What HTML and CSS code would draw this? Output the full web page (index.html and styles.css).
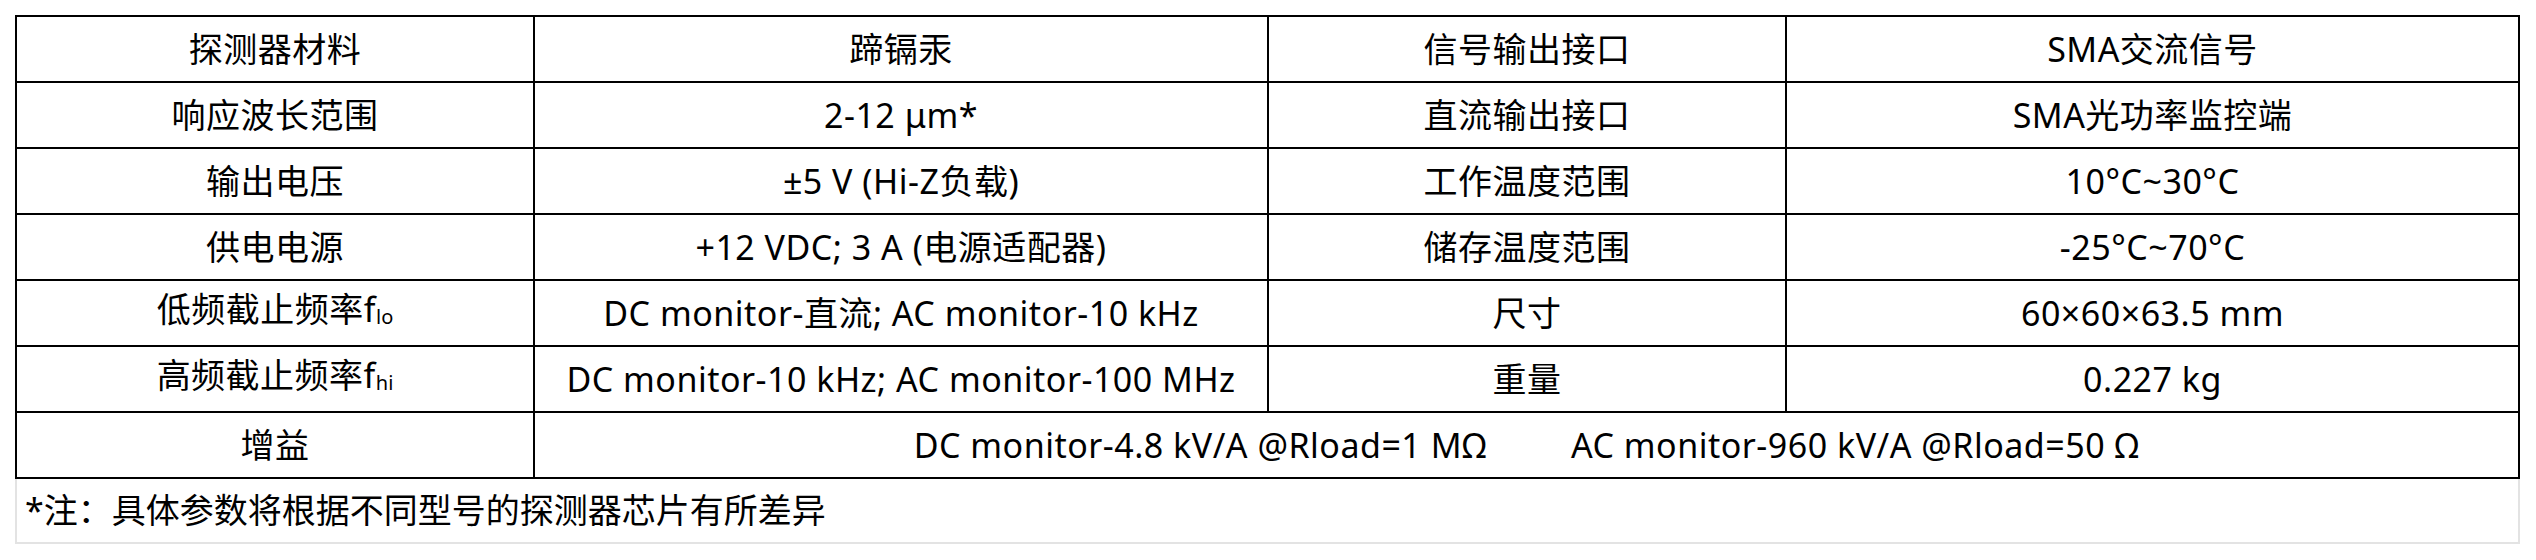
FILE: index.html
```html
<!DOCTYPE html>
<html lang="zh-CN">
<head>
<meta charset="utf-8">
<title>参数</title>
<link rel="stylesheet" href="styles.css">
</head>
<body>
<div class="wrap">
  <table class="spec">
    <colgroup>
      <col class="c-label">
      <col class="c-value">
      <col class="c-label">
      <col class="c-value2">
    </colgroup>
    <tbody>
      <tr><td>探测器材料</td><td>蹄镉汞</td><td>信号输出接口</td><td>SMA交流信号</td></tr>
      <tr><td>响应波长范围</td><td>2-12 μm*</td><td>直流输出接口</td><td>SMA光功率监控端</td></tr>
      <tr><td>输出电压</td><td>±5 V (Hi-Z负载)</td><td>工作温度范围</td><td>10°C~30°C</td></tr>
      <tr><td>供电电源</td><td>+12 VDC; 3 A (电源适配器)</td><td>储存温度范围</td><td>-25°C~70°C</td></tr>
      <tr><td>低频截止频率f<span class="sub">lo</span></td><td>DC monitor-直流; AC monitor-10 kHz</td><td>尺寸</td><td>60×60×63.5 mm</td></tr>
      <tr><td>高频截止频率f<span class="sub">hi</span></td><td>DC monitor-10 kHz; AC monitor-100 MHz</td><td>重量</td><td>0.227 kg</td></tr>
      <tr><td>增益</td><td colspan="3">DC monitor-4.8 kV/A @Rload=1 MΩ&nbsp;&nbsp;&nbsp;&nbsp;&nbsp;&nbsp;&nbsp;&nbsp;&nbsp;AC monitor-960 kV/A @Rload=50 Ω</td></tr>
    </tbody>
  </table>
  <div class="note">*注：具体参数将根据不同型号的探测器芯片有所差异</div>
</div>
</body>
</html>
```
FILE: styles.css
```css
html, body {
  margin: 0;
  padding: 0;
  background: #ffffff;
}
body {
  font-family: "Noto Sans", "Noto Sans CJK SC", sans-serif;
  font-size: 34px;
  color: #000000;
}
.wrap {
  padding: 15px 0 0 15px;
  width: 2505px;
}
.spec {
  width: 2505px;
  border-collapse: collapse;
  table-layout: fixed;
  border: 2px solid #000;
}
.c-label { width: 518px; }
.c-value { width: 734px; }
.c-value2 { width: 733px; }
.spec td {
  border: 2px solid #000;
  height: 64px;
  padding: 0;
  text-align: center;
  vertical-align: middle;
  line-height: 40px;
  white-space: nowrap;
  letter-spacing: 0.5px;
}
.sub {
  font-size: 20px;
  letter-spacing: 0;
  vertical-align: -2px;
}
.note {
  height: 63px;
  border: 2px solid #e3e3e3;
  border-top: none;
  box-sizing: content-box;
  padding: 0 8px;
  line-height: 63px;
  width: 2485px;
}
```
